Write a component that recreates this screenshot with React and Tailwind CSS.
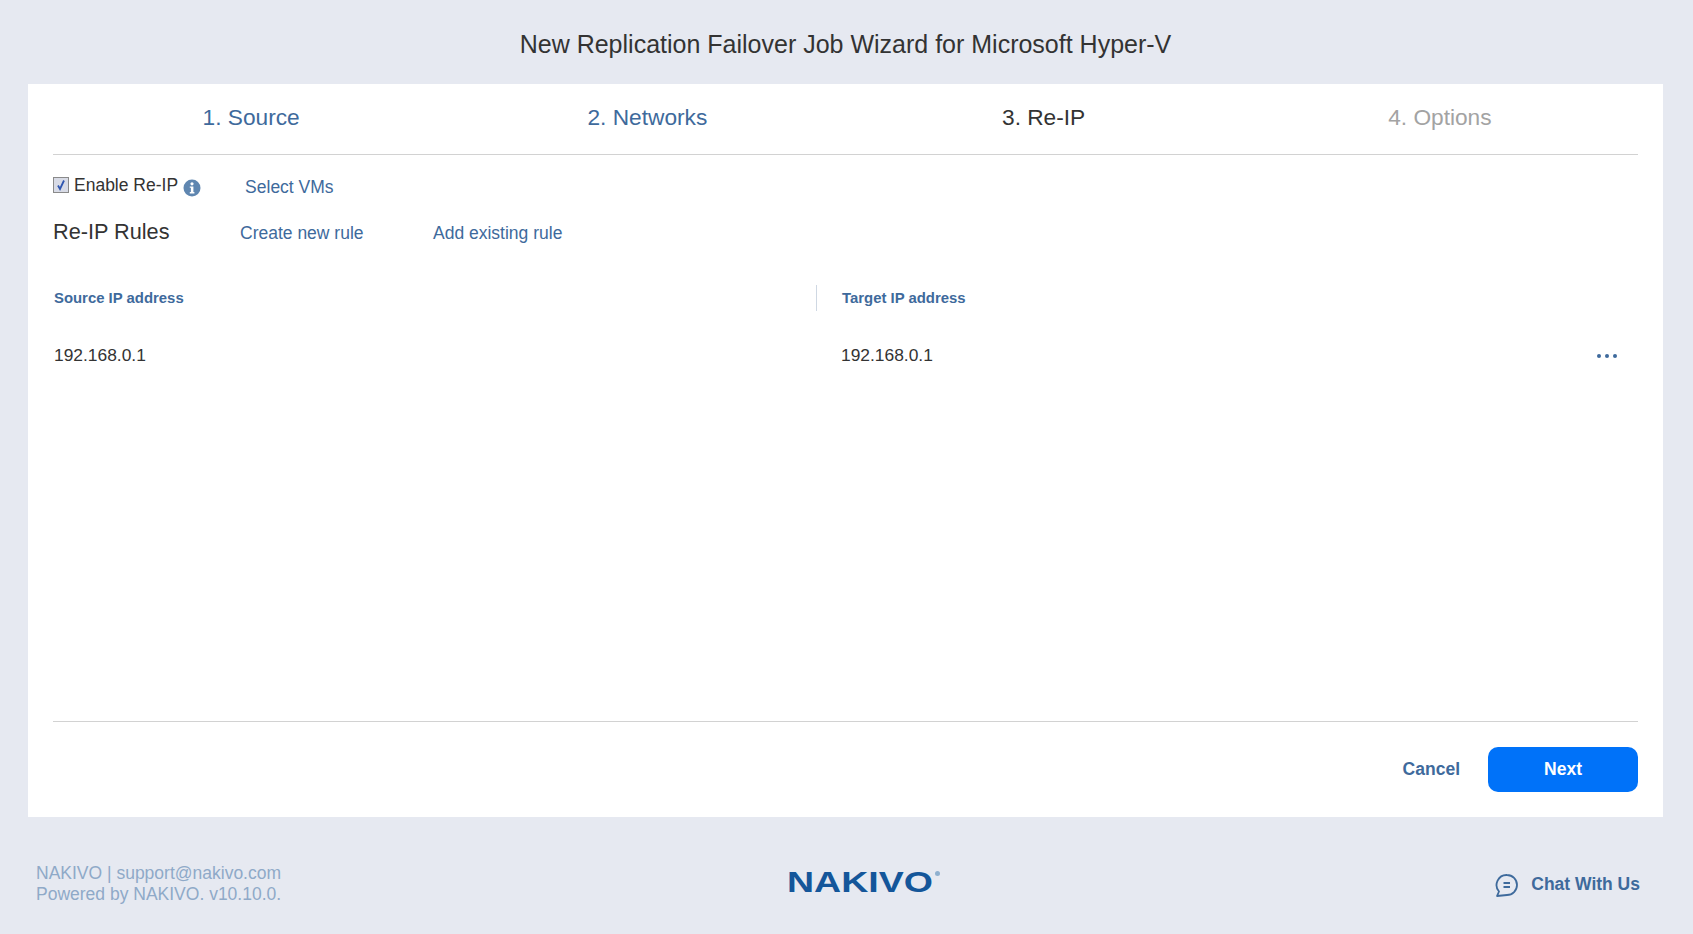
import React from "react";

const tabs = [
  { label: "1. Source", color: "text-[#3e6a9c]" },
  { label: "2. Networks", color: "text-[#3e6a9c]" },
  { label: "3. Re-IP", color: "text-[#333333]" },
  { label: "4. Options", color: "text-[#a3a3a3]" },
];

const NakivoLogo = () => (
  <div className="relative w-[156px] h-[30px] -mt-[4px] flex items-center">
    <span className="origin-left scale-x-[1.25] text-[30px] leading-[30px] font-bold text-[#14569a]">NAKIVO</span>
    {/* registered mark */}
    <span className="absolute left-[148px] top-[4px] w-[5px] h-[5px] rounded-full bg-[#8fb0cf]" />
  </div>
);

const App = () => {
  return (
    <div className="h-[934px] bg-[#e6e9f1] flex flex-col font-['Liberation_Sans',Arial,sans-serif] text-[#333333]">
      {/* Title */}
      <div className="h-[84px] flex items-center justify-center text-[25px] pt-[6px] -translate-x-[1px]">
        New Replication Failover Job Wizard for Microsoft Hyper-V
      </div>

      {/* Wizard panel */}
      <div className="mx-[28px] w-[1635px] h-[733px] bg-white px-[25px] flex flex-col">
        <div className="grid grid-cols-4 h-[71px] border-b border-[#d2d2d2] items-center text-[22.7px] pb-[3px]">
          {tabs.map((tab) => (
            <div key={tab.label} className={`text-center ${tab.color}`}>
              {tab.label}
            </div>
          ))}
        </div>

        <div className="flex items-center h-[27px] mt-[18px] text-[17.5px]">
          <span className="w-[16px] h-[16px] -mt-[3px] bg-[#d8dbe6] border border-[#8a8a8a] flex items-center justify-center">
            <svg width="12" height="12" viewBox="0 0 12 12">
              <path d="M3 6.5 L5 10 L9 1.5" fill="none" stroke="#2f56b0" strokeWidth="1.8" />
            </svg>
          </span>
          <span className="ml-[5px] mb-[2px]">Enable Re-IP</span>
          <svg className="ml-[5px] mt-[3px]" width="18" height="18" viewBox="0 0 18 18">
            <circle cx="9" cy="9" r="8.5" fill="#5f86b0" />
            <circle cx="9" cy="4.8" r="1.6" fill="#ffffff" />
            <path d="M6.8 7.4 H10.4 V13 H11.4 V14.4 H6.8 V13 H7.9 V8.8 H6.8 Z" fill="#ffffff" />
          </svg>
          <span className="ml-[44px] mt-[1px] text-[#3e6a9c]">Select VMs</span>
        </div>

        <div className="flex items-center h-[28px] mt-[19px]">
          <span className="w-[187px] text-[21.7px] -mt-[2px]">Re-IP Rules</span>
          <span className="w-[194px] text-[17.5px] text-[#3e6a9c]">Create new rule</span>
          <span className="-ml-[1px] text-[17.5px] text-[#3e6a9c]">Add existing rule</span>
        </div>

        <div className="flex items-center h-[26px] mt-[38px] text-[14.9px] font-bold text-[#3e6a9c]">
          <span className="w-[764px] pl-[1px] h-full flex items-center border-r border-[#cfd8e3]">Source IP address</span>
          <span className="pl-[25px]">Target IP address</span>
        </div>

        <div className="flex items-center h-[24px] mt-[32px] text-[17.4px]">
          <span className="w-[788px] pl-[1px]">192.168.0.1</span>
          <span className="flex-1">192.168.0.1</span>
          <span className="flex gap-[4px] mr-[21px] mt-[2px]">
            <span className="w-[4px] h-[4px] rounded-full bg-[#3e6a9c]" />
            <span className="w-[4px] h-[4px] rounded-full bg-[#3e6a9c]" />
            <span className="w-[4px] h-[4px] rounded-full bg-[#3e6a9c]" />
          </span>
        </div>

        <div className="mt-auto border-t border-[#d2d2d2] h-[96px] flex items-center justify-end">
          <button className="text-[17.5px] font-bold text-[#3e6a9c] mr-[28px]">Cancel</button>
          <button className="w-[150px] h-[45px] rounded-[10px] bg-[#0072f9] text-white text-[17.5px] font-bold">
            Next
          </button>
        </div>
      </div>

      {/* Footer */}
      <div className="flex-1 flex items-center justify-between pl-[36px] pr-[53px] pt-[17px]">
        <div className="w-[454px] text-[17.5px] leading-[21px] text-[#8fa9c8]">
          <div>NAKIVO | support@nakivo.com</div>
          <div>Powered by NAKIVO. v10.10.0.</div>
        </div>
        <NakivoLogo />
        <div className="w-[400px] flex items-center justify-end text-[17.5px] font-bold text-[#3e6a9c]">
          <svg className="mr-[12px] mt-[2px]" width="24" height="24" viewBox="0 0 24 24" fill="none" stroke="#3e6a9c" strokeWidth="1.8">
            <path d="M12 2 A10 10 0 1 1 12 22 L2 23 L4 18.5 A10 10 0 0 1 12 2 Z" strokeLinejoin="round" />
            <path d="M8.5 10 H15 M8.5 14 H15" />
          </svg>
          Chat With Us
        </div>
      </div>
    </div>
  );
};

export default App;
